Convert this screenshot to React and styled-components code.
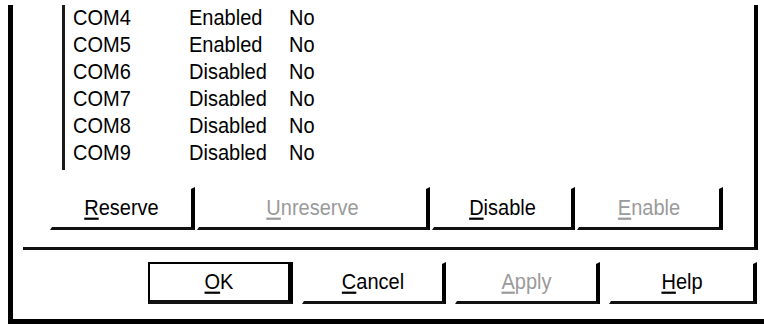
import React from "react";
import styled, { createGlobalStyle } from "styled-components";

const Global = createGlobalStyle`
  html, body { margin: 0; padding: 0; background: #fff; overflow: hidden; }
  body { font-family: "Liberation Sans", Arial, sans-serif; color: #000; }
`;

const Dialog = styled.div`
  box-sizing: border-box;
  margin: 8px 0 0 8px;
  width: 756px;
  border-left: 5px solid #000;
  border-bottom: 5px solid #000;
  padding-bottom: 15px;
`;

const TabPage = styled.div`
  box-sizing: border-box;
  margin-left: 10px;
  width: 735px;
  border-right: 4px solid #000;
  border-bottom: 3px solid #111;
  padding-bottom: 17px;
`;

const ListBox = styled.div`
  box-sizing: border-box;
  margin-left: 39px;
  height: 165px;
  width: 420px;
  border-left: 3px solid #1a1a1a;
  padding-left: 8px;
`;

const Rows = styled.div`
  margin-top: -3px;
`;

const Row = styled.div`
  display: grid;
  grid-template-columns: 116px 100px auto;
  height: 27px;
  line-height: 27px;
  font-size: 20px;
  white-space: nowrap;
`;

const Label = styled.span`
  display: inline-block;
  transform: scaleY(1.1);
  transform-origin: 50% 60%;
`;

const ButtonRow = styled.div`
  display: flex;
  gap: ${(p) => p.$gap}px;
  margin-top: ${(p) => p.$top}px;
  padding-left: ${(p) => p.$left}px;
`;

const Button = styled.div`
  box-sizing: border-box;
  width: ${(p) => p.$w}px;
  height: ${(p) => p.$h}px;
  display: flex;
  align-items: center;
  justify-content: center;
  font-size: 20px;
  background: #fff;
  color: ${(p) => (p.$disabled ? "#9a9a9a" : "#000")};
  border-top: 2px solid ${(p) => (p.$default ? "#000" : "#fff")};
  border-left: 2px solid ${(p) => (p.$default ? "#000" : "#fff")};
  border-right: ${(p) => (p.$default ? 5 : 4)}px solid #000;
  border-bottom: ${(p) => (p.$default ? 4 : 3)}px solid #111;
  u { text-decoration-thickness: 2px; text-underline-offset: 2px; }
`;

const ports = [
  ["COM4", "Enabled", "No"],
  ["COM5", "Enabled", "No"],
  ["COM6", "Disabled", "No"],
  ["COM7", "Disabled", "No"],
  ["COM8", "Disabled", "No"],
  ["COM9", "Disabled", "No"],
];

export default function App() {
  return (
    <>
      <Global />
      <Dialog>
        <TabPage>
          <ListBox>
            <Rows>
              {ports.map(([name, state, res]) => (
                <Row key={name}>
                  <span><Label>{name}</Label></span>
                  <span><Label>{state}</Label></span>
                  <span><Label>{res}</Label></span>
                </Row>
              ))}
            </Rows>
          </ListBox>
          <ButtonRow $gap={2} $top={17} $left={27}>
            <Button $w={145} $h={43}><Label><u>R</u>eserve</Label></Button>
            <Button $w={233} $h={43} $disabled><Label><u>U</u>nreserve</Label></Button>
            <Button $w={143} $h={43}><Label><u>D</u>isable</Label></Button>
            <Button $w={146} $h={43} $disabled><Label><u>E</u>nable</Label></Button>
          </ButtonRow>
        </TabPage>
        <ButtonRow $gap={9} $top={12} $left={135}>
          <Button $w={145} $h={42} $default><Label><u>O</u>K</Label></Button>
          <Button $w={144} $h={42}><Label><u>C</u>ancel</Label></Button>
          <Button $w={145} $h={42} $disabled><Label><u>A</u>pply</Label></Button>
          <Button $w={148} $h={42}><Label><u>H</u>elp</Label></Button>
        </ButtonRow>
      </Dialog>
    </>
  );
}
